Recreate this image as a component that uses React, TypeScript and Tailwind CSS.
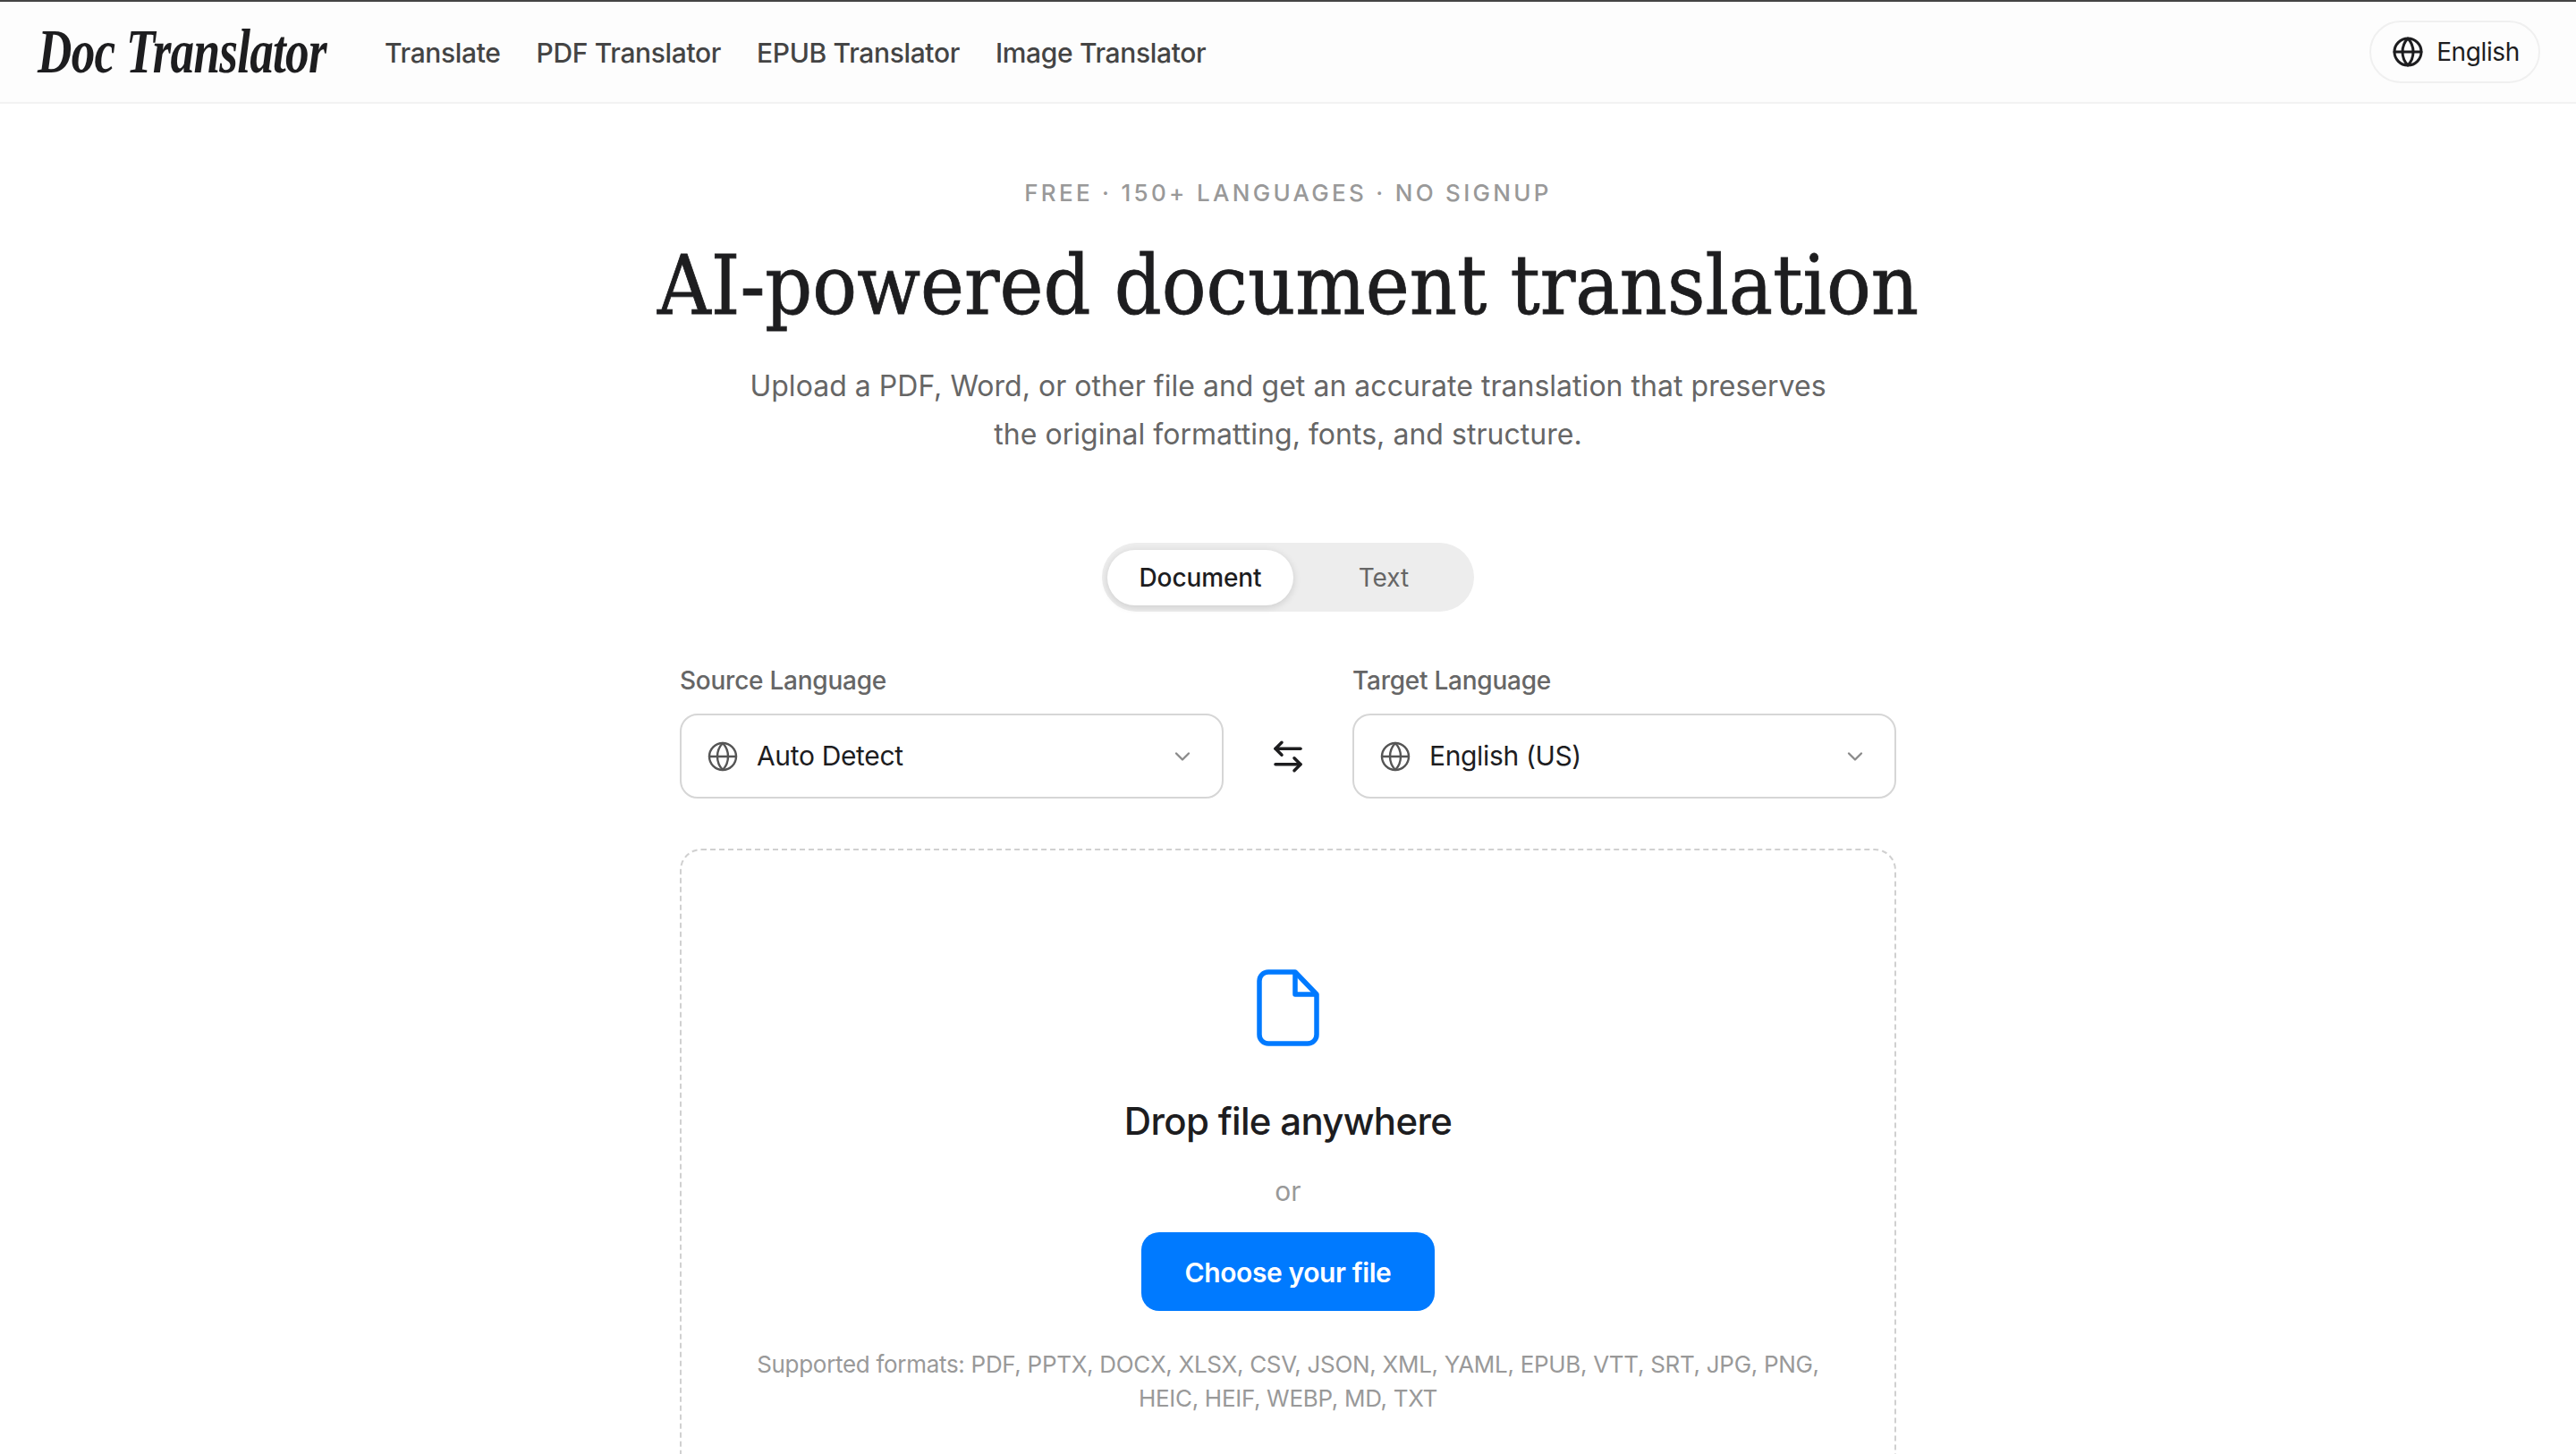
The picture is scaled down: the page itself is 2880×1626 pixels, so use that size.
import { ArrowLeftRight, ChevronDown, Globe } from "lucide-react";

const NAV_LINKS = ["Translate", "PDF Translator", "EPUB Translator", "Image Translator"];

function FileIcon() {
  return (
    <svg viewBox="0 0 70 86" className="h-[86px] w-[70px]" fill="none" stroke="#007aff" strokeWidth="5.5" strokeLinejoin="round">
      <path d="M13 3h30l24 25v45a10 10 0 0 1-10 10H13A10 10 0 0 1 3 73V13A10 10 0 0 1 13 3Z" />
      <path d="M43 3v25h24" />
    </svg>
  );
}

function LanguageSelect({ label, value }: { label: string; value: string }) {
  return (
    <div className="w-[608px]">
      <div className="mb-[20px] text-[28px] leading-[34px] font-medium tracking-[-0.25px] text-[#666666]">{label}</div>
      <div className="flex h-[95px] items-center rounded-[20px] border-2 border-[#d6d6d6] bg-white pr-[30px] pl-[28px]">
        <Globe className="h-[36px] w-[36px] text-[#555555]" strokeWidth={1.6} />
        <span className="ml-[20px] flex-1 text-[30px] tracking-[-0.35px] text-[#1d1d1f]">{value}</span>
        <ChevronDown className="h-[28px] w-[28px] text-[#8a8a8a]" strokeWidth={2} />
      </div>
    </div>
  );
}

export default function App() {
  return (
    <div className="h-[1626px] overflow-hidden bg-white font-['Inter',sans-serif]">
      <header className="flex h-[116px] items-center border-t-2 border-b-2 border-t-[#444444] border-b-[#f2f2f2] bg-[#fdfdfd] pr-[40px] pl-[42px]">
        <div className="w-[388px] origin-left scale-x-[0.76] font-['Liberation_Serif',serif] text-[70px] leading-none font-bold tracking-[-1px] whitespace-nowrap text-[#1d1d1f] italic">
          Doc Translator
        </div>
        <nav className="flex flex-1 gap-[40px] pt-[2px]">
          {NAV_LINKS.map((link) => (
            <a key={link} className="text-[30px] font-medium tracking-[-0.35px] text-[#444444]">
              {link}
            </a>
          ))}
        </nav>
        <button className="flex h-[70px] w-[191px] items-center justify-center gap-[14px] rounded-full border-2 border-[#f0f0f0] pl-[2px] text-[28px] tracking-[-0.4px] text-[#1d1d1f]">
          <Globe className="h-[36px] w-[36px] text-[#1d1d1f]" strokeWidth={2} />
          English
        </button>
      </header>

      <main className="flex flex-col items-center">
        <p className="mt-[84px] text-[26px] leading-[32px] font-medium tracking-[3.3px] text-[#999999]">
          FREE · 150+ LANGUAGES · NO SIGNUP
        </p>
        <h1 className="mt-[28px] font-['DejaVu_Serif_Condensed','DejaVu_Serif',serif] text-[92px] leading-[120px] text-[#1d1d1f] [-webkit-text-stroke:0.8px_#1d1d1f]">
          AI-powered document translation
        </h1>
        <p className="mt-[24px] w-[1300px] pt-[1px] text-center text-[32px] leading-[54px] tracking-[0.03px] text-[#666666]">
          Upload a PDF, Word, or other file and get an accurate translation that preserves
          <br />
          the original formatting, fonts, and structure.
        </p>

        <div className="mt-[94px] flex h-[77px] w-[416px] items-center rounded-full bg-[#ededed] pl-[6px]">
          <div className="flex h-[62px] w-[208px] items-center justify-center rounded-full bg-white text-[28px] font-medium tracking-[-0.1px] text-[#1d1d1f] shadow-[0_2px_8px_rgba(0,0,0,0.14)]">
            Document
          </div>
          <div className="flex-1 text-center text-[28px] text-[#666666]">Text</div>
        </div>

        <div className="mt-[60px] flex w-[1360px] items-end justify-between">
          <LanguageSelect label="Source Language" value="Auto Detect" />
          <div className="flex h-[95px] items-center">
            <ArrowLeftRight className="h-[42px] w-[42px] text-[#1d1d1f]" strokeWidth={2} />
          </div>
          <LanguageSelect label="Target Language" value="English (US)" />
        </div>

        <section className="mt-[56px] flex h-[800px] w-[1360px] shrink-0 flex-col items-center rounded-[24px] border-2 border-dashed border-[#d0d0d0] pt-[133px]">
          <FileIcon />
          <h2 className="mt-[58px] text-[42px] leading-[52px] font-medium tracking-[-0.7px] text-[#1d1d1f]">Drop file anywhere</h2>
          <p className="mt-[34px] text-[30px] leading-[36px] text-[#999999]">or</p>
          <button className="mt-[28px] h-[88px] w-[328px] rounded-[20px] bg-[#007aff] pt-[2px] text-[30px] font-semibold tracking-[-0.4px] text-white">
            Choose your file
          </button>
          <p className="mt-[41px] w-[1240px] text-center text-[26px] leading-[38px] tracking-[-0.3px] text-[#999999]">
            Supported formats: PDF, PPTX, DOCX, XLSX, CSV, JSON, XML, YAML, EPUB, VTT, SRT, JPG, PNG, HEIC, HEIF, WEBP, MD, TXT
          </p>
        </section>
      </main>
    </div>
  );
}
